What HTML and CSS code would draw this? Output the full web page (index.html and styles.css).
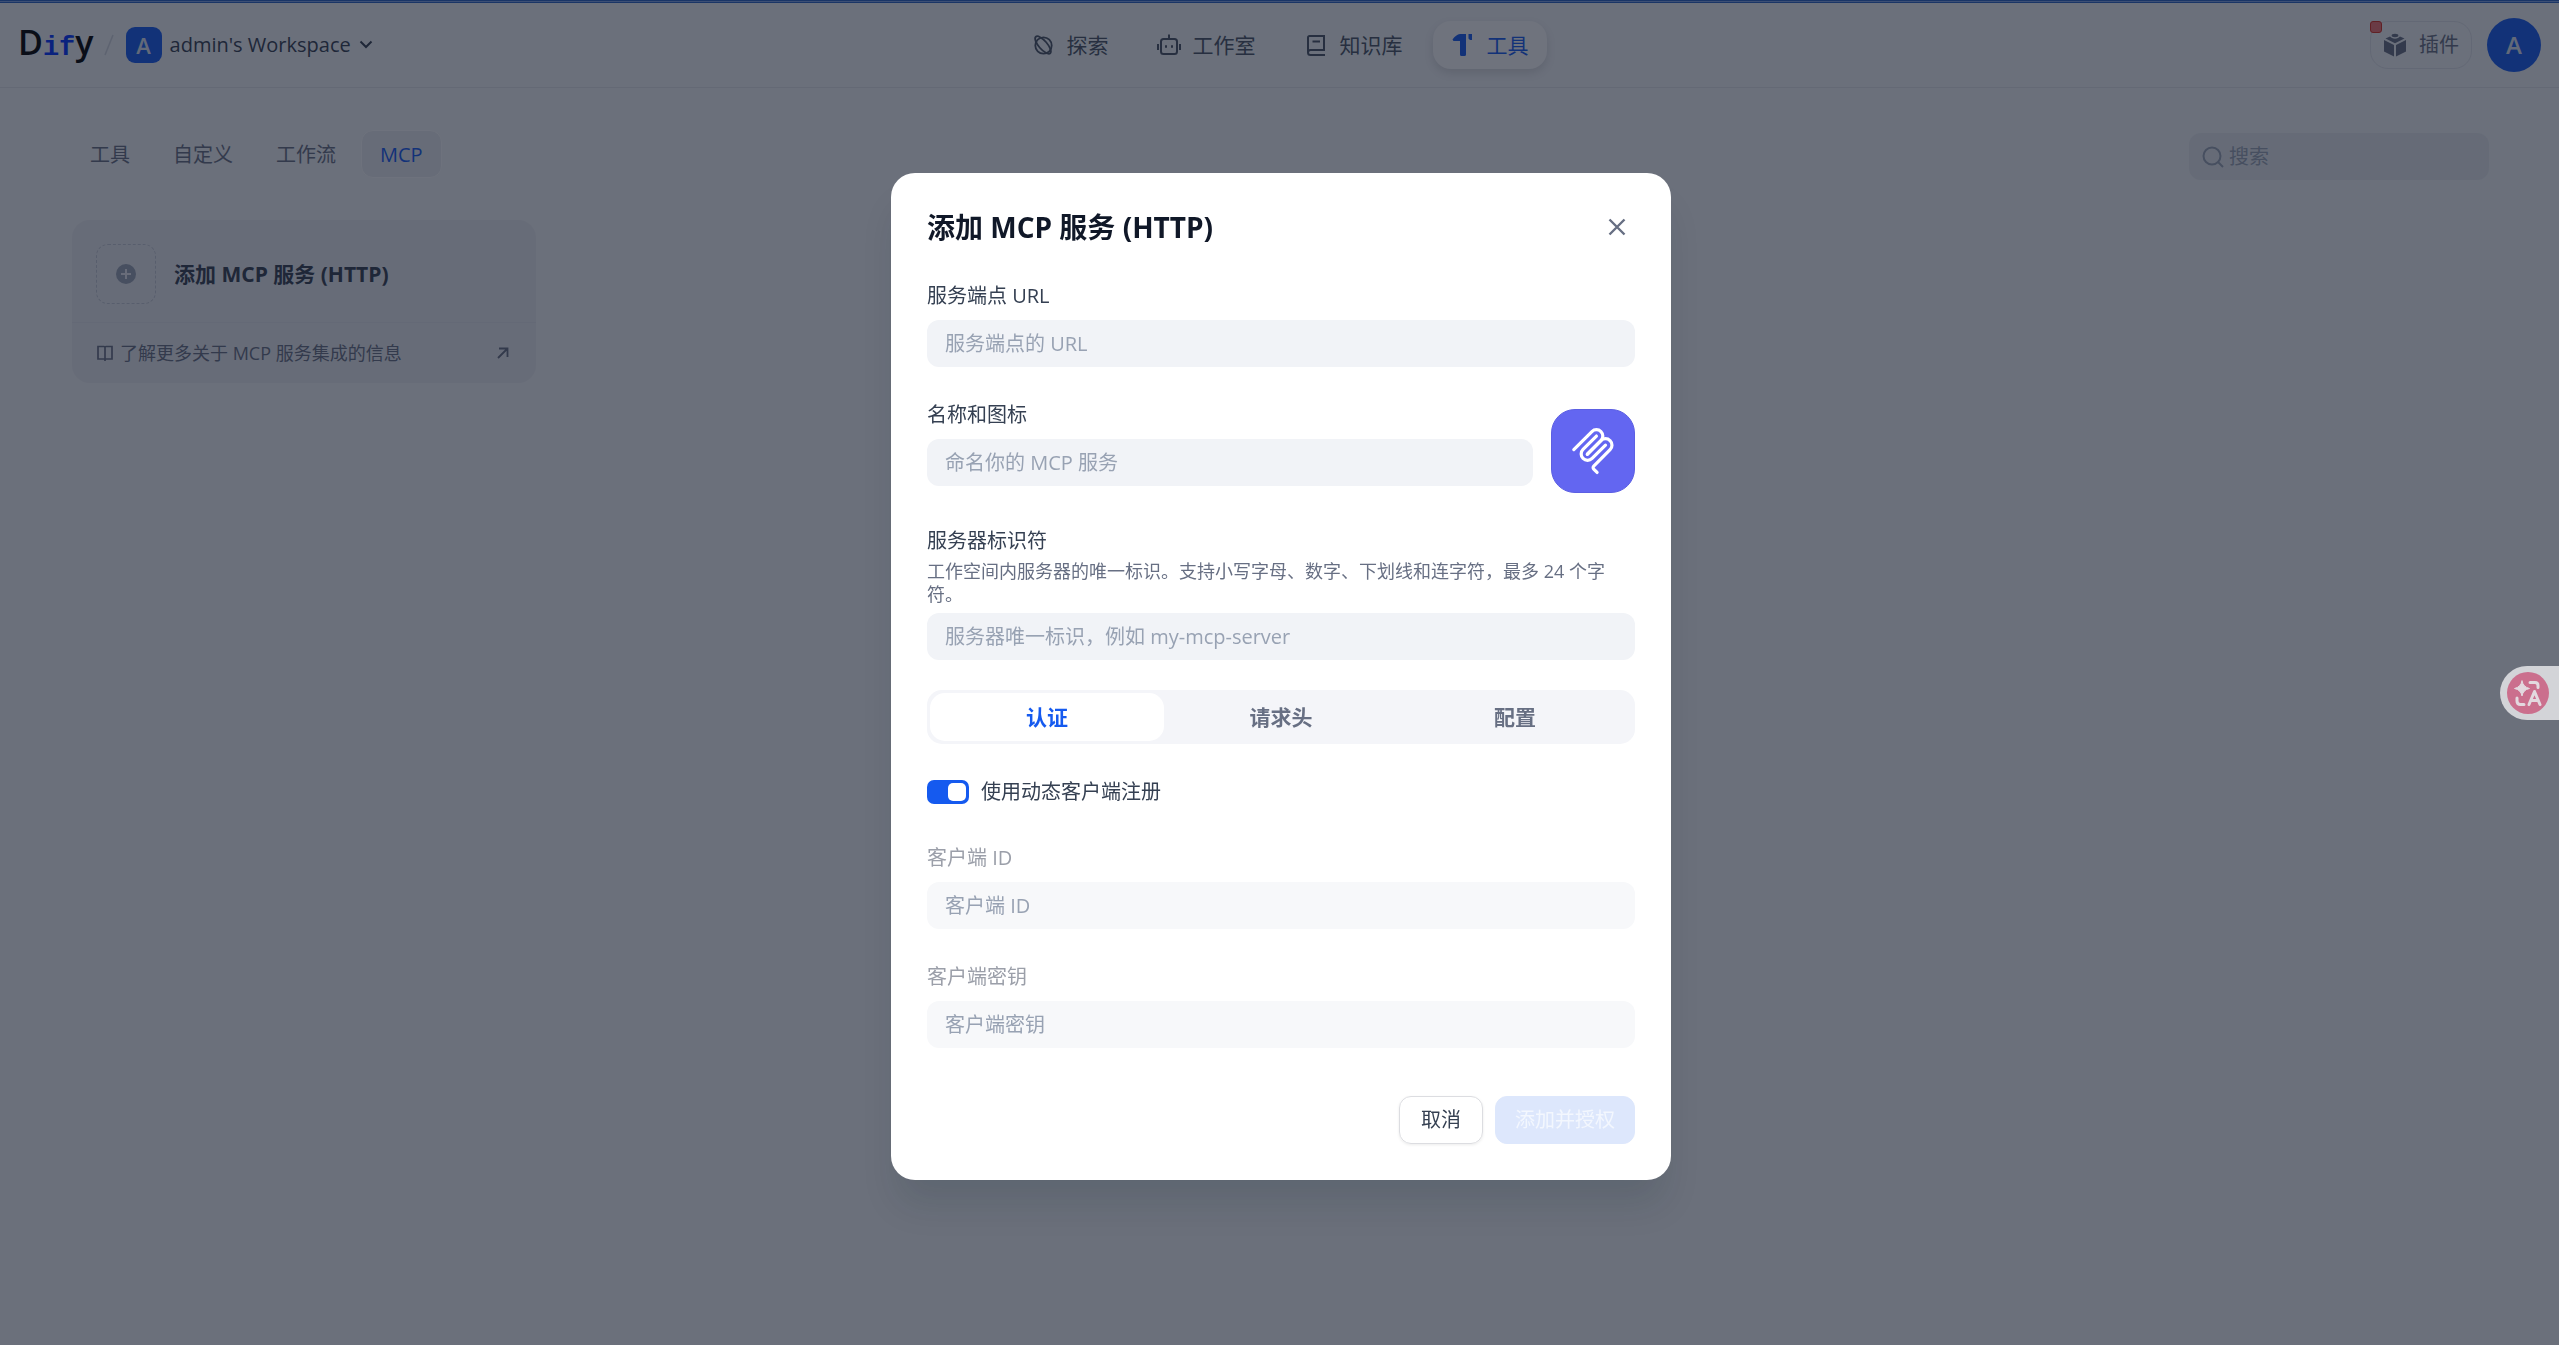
FILE: index.html
```html
<!DOCTYPE html>
<html lang="zh-CN">
<head>
<meta charset="utf-8">
<title>工具 - Dify</title>
<link rel="stylesheet" href="styles.css">
</head>
<body>
<div class="app">
  <div class="progress"></div>
  <header class="topbar">
    <div class="topbar-side">
      <a class="logo" href="#">D<span class="logo-mono">if</span>y</a>
      <svg class="slash" width="10" height="22" viewBox="0 0 10 22"><path d="M9 1 1 21" stroke="#d0d5dd" stroke-width="1.5"/></svg>
      <button class="workspace" type="button">
        <span class="workspace-badge">A</span>
        <span>admin's Workspace</span>
        <svg width="14" height="10" viewBox="0 0 14 10" fill="none" stroke="currentColor" stroke-width="2"><path d="m1.500 1.500 5.500 5.500 5.500-5.500"/></svg>
      </button>
    </div>
    <nav class="nav">
      <a class="nav-item" href="#">
        <svg width="24" height="24" viewBox="0 0 24 24" fill="none" stroke="currentColor" stroke-width="1.800"><circle cx="12.500" cy="12.500" r="8.200"/><ellipse cx="12" cy="12" rx="11" ry="4.200" transform="rotate(49 12 12)"/></svg>
        <span>探索</span>
      </a>
      <a class="nav-item" href="#">
        <svg width="24" height="24" viewBox="0 0 24 24" fill="none" stroke="currentColor" stroke-width="2"><rect x="4" y="6" width="16" height="15" rx="2.500"/><path d="M12 6V1.500M1 11v6M23 11v6"/><path d="M8 13.500h2M14 13.500h2" stroke-width="2.400"/></svg>
        <span>工作室</span>
      </a>
      <a class="nav-item" href="#">
        <svg width="24" height="24" viewBox="0 0 24 24" fill="none" stroke="currentColor" stroke-width="2"><path d="M21 22H6.500A2.500 2.500 0 0 1 4 19.500V4.500A1.500 1.500 0 0 1 5.500 3H20v14H6.500a2.500 2.500 0 0 0 0 5M8.500 8.500H16"/></svg>
        <span>知识库</span>
      </a>
      <a class="nav-item nav-item-active" href="#">
        <svg width="24" height="24" viewBox="0 0 24 24" fill="currentColor"><path d="M9 1h6v20.500a1.500 1.500 0 0 1-1.500 1.500H10.500A1.500 1.500 0 0 1 9 21.500V8H2.500L1.500 6.500Q5 1.500 9 1ZM17.500 1H21v6h-2l-1.500-1.500Z"/></svg>
        <span>工具</span>
      </a>
    </nav>
    <div class="topbar-side topbar-side-end">
      <button class="plugins" type="button">
        <svg width="24" height="24" viewBox="0 0 24 24" fill="currentColor"><path d="m1 7 10 5v11.500L1 18.500ZM23 7l-10 5v11.500l10-5ZM2.500 5.500 7 3.500l2 1.500q3 1.500 6 0l2-1.500 4.500 2L12 10.200Z"/><ellipse cx="12" cy="2.500" rx="3.400" ry="1.700"/></svg>
        <span>插件</span>
        <span class="plugins-dot"></span>
      </button>
      <button class="avatar" type="button">A</button>
    </div>
  </header>

  <main class="page">
    <div class="toolbar">
      <nav class="tabs">
        <a class="tab" href="#">工具</a>
        <a class="tab" href="#">自定义</a>
        <a class="tab" href="#">工作流</a>
        <a class="tab tab-active" href="#">MCP</a>
      </nav>
      <label class="search">
        <svg width="24" height="24" viewBox="0 0 24 24" fill="none" stroke="currentColor" stroke-width="2"><circle cx="11" cy="11" r="8.500"/><path d="m17 17 5 5"/></svg>
        <input type="text" placeholder="搜索" aria-label="搜索">
      </label>
    </div>
    <div class="cards">
      <section class="card">
        <button class="card-main" type="button">
          <span class="card-icon"><svg width="20" height="20" viewBox="0 0 20 20"><circle cx="10" cy="10" r="10" fill="#98a2b3"/><path d="M10 5v10M5 10h10" stroke="#eaecf2" stroke-width="2"/></svg></span>
          <span>添加 MCP 服务 (HTTP)</span>
        </button>
        <a class="card-link" href="#">
          <svg width="18" height="18" viewBox="0 0 18 18" fill="none" stroke="currentColor" stroke-width="1.700"><path d="M9 17V3.500Q9 2.500 8 2.500H2v12.500h14V2.500h-6q-1 0-1 1"/></svg>
          <span>了解更多关于 MCP 服务集成的信息</span>
          <svg class="card-arrow" width="18" height="18" viewBox="0 0 18 18" fill="none" stroke="currentColor" stroke-width="1.800"><path d="m4 14 9-9M5 4.500h8.500V13"/></svg>
        </a>
      </section>
    </div>
  </main>
</div>

<div class="overlay">
  <form class="modal" role="dialog" aria-labelledby="modal-title">
    <div class="modal-head">
      <h1 class="modal-title" id="modal-title">添加 MCP 服务 (HTTP)</h1>
      <button class="close" type="button" aria-label="关闭">
        <svg width="18" height="18" viewBox="0 0 18 18" fill="none" stroke="currentColor" stroke-width="2.400"><path d="m1.500 1.500 15 15M16.500 1.500l-15 15"/></svg>
      </button>
    </div>

    <div class="fields">
      <div class="field">
        <label class="label" for="url">服务端点 URL</label>
        <input class="input" id="url" type="text" placeholder="服务端点的 URL">
      </div>
      <div class="name-row">
        <div class="field">
          <label class="label" for="name">名称和图标</label>
          <input class="input" id="name" type="text" placeholder="命名你的 MCP 服务">
        </div>
        <button class="app-icon" type="button" aria-label="图标">
          <svg width="48" height="48" viewBox="0 0 180 180" fill="none" stroke="currentColor" stroke-width="12" stroke-linecap="round"><path d="M18 84.853 85.882 16.971C95.255 7.598 110.451 7.598 119.823 16.971C129.196 26.343 129.196 41.539 119.823 50.912L68.558 102.177"/><path d="M69.265 101.47 119.823 50.912C129.196 41.539 144.392 41.539 153.765 50.912L154.118 51.265C163.491 60.638 163.491 75.834 154.118 85.206L92.725 146.6C89.601 149.724 89.601 154.789 92.725 157.913L105.331 170.52"/><path d="M102.853 33.941 52.648 84.146C43.276 93.518 43.276 108.714 52.648 118.087C62.021 127.459 77.217 127.459 86.589 118.087L136.794 67.882"/></svg>
        </button>
      </div>
      <div class="field">
        <label class="label" for="sid">服务器标识符</label>
        <p class="hint" id="sid-hint">工作空间内服务器的唯一标识。支持小写字母、数字、下划线和连字符，最多 24 个字符。</p>
        <input class="input" id="sid" type="text" aria-describedby="sid-hint" placeholder="服务器唯一标识，例如 my-mcp-server">
      </div>
    </div>

    <div class="segments">
      <button class="segment segment-active" type="button">认证</button>
      <button class="segment" type="button">请求头</button>
      <button class="segment" type="button">配置</button>
    </div>

    <label class="switch-row">
      <input class="switch" type="checkbox" role="switch" checked>
      <span>使用动态客户端注册</span>
    </label>

    <div class="fields">
      <div class="field field-disabled">
        <label class="label" for="cid">客户端 ID</label>
        <input class="input" id="cid" type="text" placeholder="客户端 ID" disabled>
      </div>
      <div class="field field-disabled">
        <label class="label" for="secret">客户端密钥</label>
        <input class="input" id="secret" type="text" placeholder="客户端密钥" disabled>
      </div>
    </div>

    <div class="actions">
      <button class="btn" type="button">取消</button>
      <button class="btn btn-primary" type="submit" disabled>添加并授权</button>
    </div>
  </form>
</div>

<button class="translate" type="button" aria-label="翻译">
  <svg width="42" height="42" viewBox="0 0 42 42" fill="none" stroke="#e3d9df" stroke-width="3" stroke-linecap="round" stroke-linejoin="round"><circle cx="21" cy="21" r="21" fill="#cb6f8d" stroke="none"/><path d="M15 9q1.200 6 7.500 7.500-6.300 1.200-7.500 7.500-1.200-6.300-7.500-7.500Q13.800 15 15 9Z" fill="#e3d9df" stroke-width="1"/><path d="M23 10.500h5q3 0 3 3v2M10 26v3q0 3.500 3.500 3.500H17"/><path d="m22 32.500 5.500-13 5.500 13M24 28.500h7"/></svg>
</button>
</body>
</html>
```
FILE: styles.css
```css
* {
  box-sizing: border-box;
}

body {
  margin: 0;
  min-height: 100vh;
  background: #f2f4f7;
  color: #354052;
  font-family: "Open Sans", "Noto Sans CJK SC", sans-serif;
  font-size: 20px;
  line-height: 30px;
}

button,
input {
  margin: 0;
  padding: 0;
  border: 0;
  background: none;
  color: inherit;
  font: inherit;
}

a {
  color: inherit;
  text-decoration: none;
}

svg {
  display: block;
  flex: none;
}

/* Top bar */

.progress {
  height: 3px;
  border-top: 1px solid #2a62c4;
  border-bottom: 1px solid #2a62c4;
  background: #7fa2e6;
}

.topbar {
  display: flex;
  align-items: center;
  height: 85px;
  padding: 0 18px;
  border-bottom: 1px solid #e2e4e9;
}

.topbar-side {
  display: flex;
  flex: 1;
  align-items: center;
}

.topbar-side-end {
  justify-content: flex-end;
  gap: 15px;
}

.logo {
  color: #000;
  font-family: "Open Sans", sans-serif;
  font-size: 34px;
  font-weight: 600;
  line-height: 36px;
}

.logo-mono {
  color: #0033ff;
  font-family: "Liberation Mono", monospace;
  font-size: 27px;
  font-weight: 700;
}

.slash {
  margin: 0 12px 0 10px;
}

.workspace {
  display: flex;
  align-items: center;
  gap: 8px;
}

.workspace-badge {
  width: 36px;
  height: 36px;
  border-radius: 9px;
  background: #155aef;
  color: #dbe3f3;
  font-size: 22px;
  font-weight: 600;
  line-height: 36px;
}

.nav {
  display: flex;
  gap: 12px;
}

.nav-item {
  display: flex;
  align-items: center;
  gap: 12px;
  height: 48px;
  padding: 0 18px;
  border-radius: 18px;
  color: #495464;
  font-size: 21px;
}

.nav-item-active {
  background: #fcfcfd;
  box-shadow: 0 4px 10px rgba(9, 9, 11, 0.12);
  color: #155aef;
}

.plugins {
  position: relative;
  display: flex;
  align-items: center;
  gap: 12px;
  height: 48px;
  padding: 0 12px;
  border: 1px solid #dfe2e8;
  border-radius: 18px;
  color: #676f83;
}

.plugins-dot {
  position: absolute;
  top: -1px;
  left: -1px;
  width: 12px;
  height: 12px;
  border: 1px solid #d92d20;
  border-radius: 3px;
  background: #f07070;
}

.avatar {
  width: 54px;
  height: 54px;
  border-radius: 50%;
  background: #155aef;
  color: #dbe3f3;
  font-size: 24px;
  font-weight: 600;
}

/* Page */

.page {
  display: flex;
  flex-direction: column;
  gap: 40px;
  padding: 42px 70px 40px 72px;
}

.toolbar {
  display: flex;
  justify-content: space-between;
  min-height: 50px;
}

.tabs {
  display: flex;
  gap: 7px;
}

.tab {
  height: 48px;
  padding: 0 18px;
  border-radius: 12px;
  color: #676f83;
  line-height: 50px;
}

.tab-active {
  border: 1px solid #fafbfc;
  background: #e9ebf0;
  color: #155aef;
  line-height: 48px;
}

.search {
  display: flex;
  align-items: center;
  align-self: flex-end;
  gap: 4px;
  width: 300px;
  height: 47px;
  padding: 0 12px;
  border-radius: 12px;
  background: #e5e9ee;
  color: #98a2b3;
}

.search input {
  flex: 1;
  min-width: 0;
}

.cards {
  display: grid;
  grid-template-columns: repeat(5, 1fr);
  gap: 24px;
}

.card {
  border-radius: 18px;
  background: #e9ebf0;
}

.card-main {
  display: flex;
  align-items: center;
  gap: 18px;
  width: 100%;
  padding: 24px 24px 18px;
  border-bottom: 1px solid #e2e4ea;
  font-size: 21px;
  font-weight: 700;
  color: #354052;
}

.card-icon {
  display: grid;
  place-items: center;
  width: 60px;
  height: 60px;
  border: 1px dashed #c4c9d4;
  border-radius: 12px;
}

.card-link {
  display: flex;
  align-items: center;
  gap: 6px;
  padding: 15px 24px;
  color: #676f83;
  font-size: 18px;
}

.card-arrow {
  margin-left: auto;
}

/* Dialog */

.overlay {
  position: fixed;
  inset: 0;
  display: grid;
  place-items: center;
  padding: 8px 0 0 3px;
  background: rgba(16, 24, 40, 0.6);
}

.modal {
  width: 780px;
  padding: 36px;
  border-radius: 24px;
  background: #fff;
  box-shadow: 0 30px 36px -6px rgba(9, 30, 40, 0.12);
}

.modal-head {
  display: flex;
  align-items: center;
  justify-content: space-between;
  margin-bottom: 36px;
}

.modal-title {
  margin: 0;
  color: #101828;
  font-size: 28px;
  font-weight: 700;
  line-height: 36px;
}

.close {
  display: grid;
  place-items: center;
  width: 36px;
  height: 36px;
  color: #676f83;
}

.fields {
  display: flex;
  flex-direction: column;
  gap: 33px;
}

.field {
  display: flex;
  flex: 1;
  flex-direction: column;
}

.label {
  margin-bottom: 9px;
}

.input {
  width: 100%;
  height: 47px;
  padding: 0 18px;
  border-radius: 12px;
  background: #f1f3f7;
}

.input::placeholder,
.search input::placeholder {
  color: #98a2b3;
  opacity: 1;
}

.name-row {
  display: flex;
  align-items: flex-end;
  gap: 18px;
}

.name-row .field {
  align-self: flex-start;
}

.app-icon {
  display: grid;
  place-items: center;
  width: 84px;
  height: 84px;
  margin-top: 9px;
  border: 1px solid #5c5fe3;
  border-radius: 24px;
  background: #6366f1;
  color: #fff;
}

.hint {
  margin: -5px 0 7px;
  color: #676f83;
  font-size: 18px;
  line-height: 23px;
}

.segments {
  display: flex;
  margin: 30px 0 36px;
  padding: 3px;
  border-radius: 15px;
  background: #f4f5f9;
}

.segment {
  flex: 1;
  height: 48px;
  border-radius: 15px;
  color: #676f83;
  font-size: 21px;
  font-weight: 700;
}

.segment-active {
  background: #fff;
  color: #155aef;
}

.switch-row {
  display: flex;
  align-items: center;
  gap: 12px;
  margin-bottom: 39px;
  line-height: 24px;
}

.switch {
  display: flex;
  justify-content: flex-end;
  width: 42px;
  height: 24px;
  padding: 3px;
  border-radius: 7px;
  background: #155aef;
  appearance: none;
}

.switch::before {
  width: 18px;
  height: 18px;
  border-radius: 5px;
  background: #fff;
  content: "";
}

.field-disabled .label {
  color: #9b9fa9;
}

.field-disabled .input {
  background: #f7f8fa;
}

.actions {
  display: flex;
  justify-content: flex-end;
  gap: 12px;
  margin-top: 48px;
}

.btn {
  height: 48px;
  padding: 0 21px;
  border: 1px solid #dcdde1;
  border-radius: 12px;
  box-shadow: 0 1px 3px rgba(9, 9, 11, 0.08);
}

.btn-primary {
  padding: 0 19px;
  border-color: #dde7fc;
  background: #dde7fc;
  box-shadow: none;
  color: #f3f7fe;
}

/* Floating translate handle */

.translate {
  position: fixed;
  top: 666px;
  right: 0;
  padding: 6px 10px 6px 7px;
  border-radius: 27px 0 0 27px;
  background: #d3d4d8;
}
```
